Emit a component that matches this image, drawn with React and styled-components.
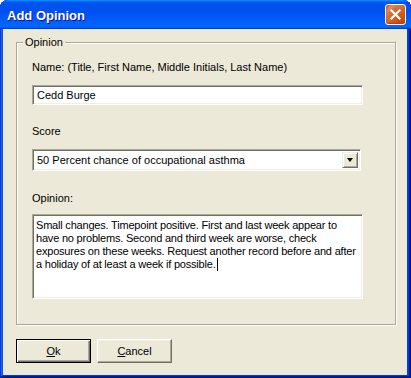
import React from 'react';
import styled, { createGlobalStyle } from 'styled-components';

const Global = createGlobalStyle`
  html, body { margin: 0; padding: 0; background: #ffffff; }
  body { font-family: "Liberation Sans", Arial, sans-serif; font-size: 11px; }
  * { box-sizing: border-box; }
`;

const Window = styled.div`
  width: 411px;
  height: 378px;
  display: flex;
  flex-direction: column;
  background: #0A3FD6;
  border-radius: 8px 8px 0 0;
  overflow: hidden;
  box-shadow: inset -1px -1px #00138c, inset 1px 1px #0831d9, inset -2px -2px #001ea0,
    inset 2px 2px #166aee, inset -3px -3px #003bda, inset 3px 3px #0855dd;
`;

const TitleBar = styled.div`
  height: 29px;
  flex: none;
  display: flex;
  align-items: center;
  justify-content: space-between;
  padding: 1px 5px 0 7px;
  background: linear-gradient(180deg, #0997ff, #0053ee 8%, #0050ee 40%, #06f 88%, #06f 93%, #005bff 95%, #003dd7 96%, #003dd7);
  border-radius: 8px 8px 0 0;
`;

const Title = styled.span`
  font-family: "Liberation Sans", Arial, sans-serif;
  font-weight: bold;
  font-size: 13px;
  color: #ffffff;
  text-shadow: 1px 1px #0f1089;
`;

const CloseButton = styled.div`
  width: 21px;
  height: 21px;
  margin-top: -1px;
  border: 1px solid #ffffff;
  border-radius: 3px;
  background: radial-gradient(circle at 90% 90%, #cc4600 0%, #dc6527 55%, #cd7546 68%, #e48b5d 80%, #e46a3c 90%, #c33c1b 100%);
  box-shadow: inset 0 -1px 2px #b23a10;
  display: flex;
  align-items: center;
  justify-content: center;
`;

const Client = styled.div`
  flex: 1;
  margin: 0 4px 3px 3px;
  background: #ece9d8;
  padding: 13px 11px 0 13px;
  display: flex;
  flex-direction: column;
`;

const GroupBox = styled.div`
  position: relative;
  height: 283px;
  border: 1px solid #aca899;
  box-shadow: inset 1px 1px #ffffff, 1px 1px #ffffff;
  padding: 18px 32px 0 15px;
  display: flex;
  flex-direction: column;
`;

const Legend = styled.span`
  position: absolute;
  top: -7px;
  left: 6px;
  padding: 0 2px;
  background: #ece9d8;
  color: #000;
  line-height: 13px;
`;

const Label = styled.div`
  color: #000;
  line-height: 13px;
  margin-top: ${(p) => p.$mt || 0}px;
  margin-bottom: ${(p) => p.$mb || 0}px;
`;

const sunken = `
  background: #ffffff;
  border-style: solid;
  border-width: 1px;
  border-color: #aca899 #ffffff #ffffff #aca899;
  box-shadow: inset 1px 1px #716f64, inset -1px -1px #f1efe2;
`;

const TextBox = styled.div`
  ${sunken}
  height: 20px;
  padding: 3px 4px 0 4px;
  line-height: 13px;
  color: #000;
`;

const Select = styled.div`
  ${sunken}
  height: 22px;
  display: flex;
  align-items: center;
  justify-content: space-between;
  padding: 2px 2px 2px 4px;
  color: #000;
  margin-right: 2px;
`;

const DropButton = styled.div`
  width: 16px;
  height: 16px;
  background: #ece9d8;
  border-style: solid;
  border-width: 1px;
  border-color: #f1efe2 #716f64 #716f64 #f1efe2;
  box-shadow: inset 1px 1px #ffffff, inset -1px -1px #aca899;
  display: flex;
  align-items: center;
  justify-content: center;
`;

const Arrow = styled.div`
  width: 0;
  height: 0;
  border-left: 3.5px solid transparent;
  border-right: 3.5px solid transparent;
  border-top: 4px solid #000;
`;

const Memo = styled.div`
  ${sunken}
  height: 85px;
  padding: 4px 3px 0 3px;
  line-height: 13px;
  letter-spacing: -0.2px;
  color: #000;
`;

const Caret = styled.span`
  display: inline-block;
  width: 1px;
  height: 13px;
  margin-left: 1px;
  background: #000;
  vertical-align: -3px;
`;

const ButtonRow = styled.div`
  display: flex;
  gap: 6px;
  margin-top: 14px;
`;

const Button = styled.button`
  width: 75px;
  height: 24px;
  background: #ece9d8;
  font-family: "Liberation Sans", Arial, sans-serif;
  font-size: 11px;
  color: #000;
  padding: 0;
  border-style: solid;
  border-width: 1px;
  border-color: ${(p) => (p.$default ? '#000' : '#ffffff #716f64 #716f64 #ffffff')};
  box-shadow: ${(p) =>
    p.$default
      ? 'inset 1px 1px #ffffff, inset -1px -1px #716f64, inset -2px -2px #aca899'
      : 'inset -1px -1px #aca899, inset 1px 1px #f1efe2'};
  u { text-decoration: underline; }
`;

export default function App() {
  return (
    <>
      <Global />
      <Window>
        <TitleBar>
          <Title>Add Opinion</Title>
          <CloseButton>
            <svg width="13" height="13" viewBox="0 0 13 13">
              <path d="M2.5 2.5 L10.5 10.5 M10.5 2.5 L2.5 10.5" stroke="#ffffff" strokeWidth="2.2" strokeLinecap="square" />
            </svg>
          </CloseButton>
        </TitleBar>
        <Client>
          <GroupBox>
            <Legend>Opinion</Legend>
            <Label $mb={11}>Name: (Title, First Name, Middle Initials, Last Name)</Label>
            <TextBox>Cedd Burge</TextBox>
            <Label $mt={20} $mb={11}>Score</Label>
            <Select>
              <span>50 Percent chance of occupational asthma</span>
              <DropButton>
                <Arrow />
              </DropButton>
            </Select>
            <Label $mt={21} $mb={9}>Opinion:</Label>
            <Memo>
              Small changes. Timepoint positive. First and last week appear to have no problems. Second and
              third week are worse, check exposures on these weeks. Request another record before and after a
              holiday of at least a week if possible.<Caret />
            </Memo>
          </GroupBox>
          <ButtonRow>
            <Button $default>
              <u>O</u>k
            </Button>
            <Button>
              <u>C</u>ancel
            </Button>
          </ButtonRow>
        </Client>
      </Window>
    </>
  );
}
